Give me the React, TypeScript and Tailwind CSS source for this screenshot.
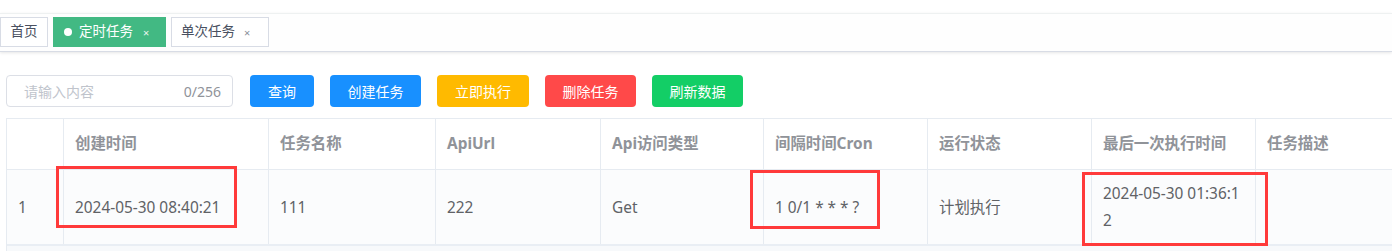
const FONT = { fontFamily: '"Noto Sans", "Noto Sans CJK SC", sans-serif' }

const COLS = 'grid-cols-[57px_205px_167px_165px_163px_164px_164px_164px_1fr]'

const HEADERS = ['', '创建时间', '任务名称', 'ApiUrl', 'Api访问类型', '间隔时间Cron', '运行状态', '最后一次执行时间', '任务描述']
const ROW = ['1', '2024-05-30 08:40:21', '111', '222', 'Get', '1 0/1 * * * ?', '计划执行', '2024-05-30 01:36:12', '']

const BUTTONS = [
  { label: '查询', cls: 'w-[64px] bg-[#1890ff]' },
  { label: '创建任务', cls: 'w-[91px] bg-[#1890ff]' },
  { label: '立即执行', cls: 'w-[92px] bg-[#ffba00]' },
  { label: '删除任务', cls: 'w-[91px] bg-[#ff4949]' },
  { label: '刷新数据', cls: 'w-[91px] bg-[#13ce66]' },
]

export default function App() {
  return (
    <div className="relative w-[1392px] h-[251px] overflow-hidden bg-white" style={FONT}>
      <div className="h-[13px] bg-white" />

      {/* tags view */}
      <div className="h-[39px] border-t border-[#eef1f1] border-b border-b-[#d8dce5] bg-[#fefefe] shadow-[0_1px_3px_0_rgba(0,0,0,0.10)] flex items-start pt-[3px] gap-[5px] text-[13.5px] leading-none">
        <div className="w-[48px] h-[30px] flex items-center justify-center border border-[#d8dce5] bg-white text-[#495060]">首页</div>
        <div className="w-[113px] h-[30px] pl-[10px] flex items-center border border-[#42b983] bg-[#42b983] text-white">
          <span className="w-[8px] h-[8px] rounded-full bg-white mr-[7px]" />
          定时任务
          <span className="ml-[10px] text-[11px] text-[#e8f5ee]">×</span>
        </div>
        <div className="w-[98px] h-[30px] pl-[9px] flex items-center border border-[#d8dce5] bg-white text-[#495060]">
          单次任务
          <span className="ml-[9px] text-[11px] text-[#8a8f99]">×</span>
        </div>
      </div>

      {/* toolbar */}
      <div className="pl-[6px] pt-[23px] flex items-center gap-[17px]">
        <div className="w-[227px] h-[32px] rounded-[4px] border border-[#dcdfe6] flex items-center justify-between pl-[17px] pr-[11px] text-[14px]">
          <span className="text-[#c0c4cc]">请输入内容</span>
          <span className="text-[#909399]">0/256</span>
        </div>
        <div className="flex gap-[16px]">
          {BUTTONS.map((b) => (
            <div key={b.label} className={`h-[32px] rounded-[4px] flex items-center justify-center text-white text-[14px] ${b.cls}`}>
              {b.label}
            </div>
          ))}
        </div>
      </div>

      {/* table */}
      <div className="ml-[6px] mt-[11px] border-l border-t border-[#e6ebf1] text-[15.4px]">
        <div className={`grid ${COLS} h-[51px] border-b border-[#e6ebf1] bg-white`}>
          {HEADERS.map((h, i) => (
            <div key={i} className={`flex items-center px-[11px] font-bold text-[#909399] ${i < 8 ? 'border-r border-[#e6ebf1]' : ''}`}>
              {h}
            </div>
          ))}
        </div>
        <div className={`grid ${COLS} h-[76px] border-b-2 border-[#e9eef4] bg-[#fbfcfd]`}>
          {ROW.map((c, i) => (
            <div key={i} className={`flex items-center px-[11px] text-[#606266] leading-[27px] break-all ${i < 8 ? 'border-r border-[#e6ebf1]' : ''}`}>
              <span>{c}</span>
            </div>
          ))}
        </div>
        <div className="h-[10px] bg-[#f7f9fb]" />
      </div>

      {/* annotation boxes */}
      <div className="absolute left-[56px] top-[166px] w-[181px] h-[62px] border-[3px] border-[#ff3a3a]" />
      <div className="absolute left-[750px] top-[170px] w-[130px] h-[59px] border-[3px] border-[#ff3a3a]" />
      <div className="absolute left-[1082px] top-[172px] w-[186px] h-[74px] border-[3px] border-[#ff3a3a]" />
    </div>
  )
}
